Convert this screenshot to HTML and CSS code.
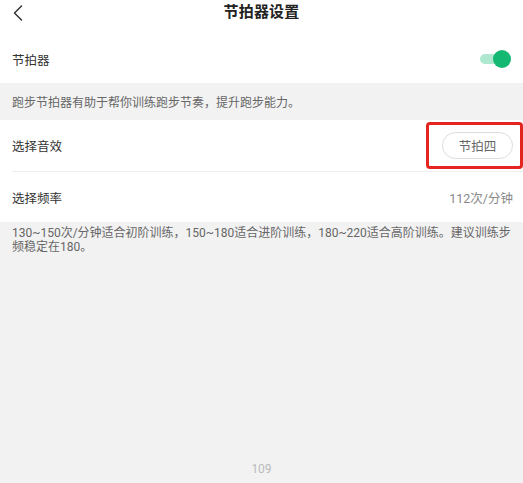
FILE: index.html
```html
<!DOCTYPE html>
<html lang="zh-CN">
<head>
<meta charset="utf-8">
<link rel="stylesheet" href="styles.css">
</head>
<body>
<div class="page">
  <header class="header">
    <svg class="back" width="12" height="18" viewBox="0 0 12 18"><path d="M9.5 2 L2.5 9 L9.5 16" fill="none" stroke="#333" stroke-width="1.5" stroke-linecap="round" stroke-linejoin="round"/></svg>
    <div class="title">节拍器设置</div>
  </header>
  <div class="row row-first">
    <span class="label">节拍器</span>
    <span class="toggle"><span class="track"></span><span class="knob"></span></span>
  </div>
  <div class="tip">跑步节拍器有助于帮你训练跑步节奏，提升跑步能力。</div>
  <div class="group">
    <div class="row row-sound">
      <span class="label">选择音效</span>
      <span class="highlight"><span class="pill">节拍四</span></span>
    </div>
    <div class="divider"></div>
    <div class="row row-rate">
      <span class="label">选择频率</span>
      <span class="value">112次/分钟</span>
    </div>
  </div>
  <div class="note">130~150次/分钟适合初阶训练，150~180适合进阶训练，180~220适合高阶训练。建议训练步频稳定在180。</div>
  <div class="spacer"></div>
  <div class="pagenum">109</div>
</div>
</body>
</html>
```
FILE: styles.css
```css
* { box-sizing: border-box; }
html, body { margin: 0; padding: 0; }
body {
  width: 523px;
  height: 483px;
  overflow: hidden;
  background: #f2f2f2;
  font-family: Roboto, "Noto Sans CJK SC", "Noto Sans", sans-serif;
  color: #333;
}
.page {
  display: flex;
  flex-direction: column;
  height: 483px;
}
.header {
  position: relative;
  height: 35px;
  background: #fff;
  display: flex;
  justify-content: center;
  align-items: flex-start;
}
.back {
  position: absolute;
  left: 12px;
  top: 4px;
}
.title {
  font-size: 15px;
  font-weight: 700;
  line-height: 24px;
  color: #222;
  letter-spacing: 0.2px;
}
.row {
  background: #fff;
  display: flex;
  align-items: center;
  justify-content: space-between;
  padding: 0 10px 0 12px;
}
.row-first { height: 48px; }
.label { font-size: 12.5px; color: #333; }
.toggle {
  position: relative;
  width: 32px;
  height: 18px;
  margin-right: 1px;
}
.track {
  position: absolute;
  left: 0;
  top: 4px;
  width: 22px;
  height: 10px;
  border-radius: 5px;
  background: #aee8d0;
}
.knob {
  position: absolute;
  right: 1px;
  top: 0;
  width: 18px;
  height: 18px;
  border-radius: 50%;
  background: #15b872;
}
.tip {
  height: 37px;
  display: flex;
  align-items: center;
  padding-left: 12px;
  font-size: 12px;
  color: #666;
}
.group { background: #fff; }
.row-sound { height: 51px; padding-right: 0; }
.highlight {
  display: flex;
  align-items: center;
  justify-content: flex-end;
  width: 97px;
  height: 47px;
  border: 3px solid #e3241f;
  border-radius: 4px;
  padding-right: 7px;
}
.pill {
  width: 71px;
  height: 27px;
  border: 1px solid #dcdcdc;
  border-radius: 14px;
  display: flex;
  align-items: center;
  justify-content: center;
  font-size: 12.5px;
  color: #666;
}
.divider {
  height: 1px;
  margin-left: 12px;
  background: #eeeeee;
}
.row-rate { height: 50px; }
.value { font-size: 12.5px; color: #888; }
.note {
  padding: 4px 6px 0 12px;
  font-size: 12px;
  line-height: 14px;
  color: #666;
}
.spacer { flex: 1; }
.pagenum {
  text-align: center;
  font-size: 12px;
  color: #bbb;
  padding: 0 0 6px 0;
  line-height: 16px;
}
```
